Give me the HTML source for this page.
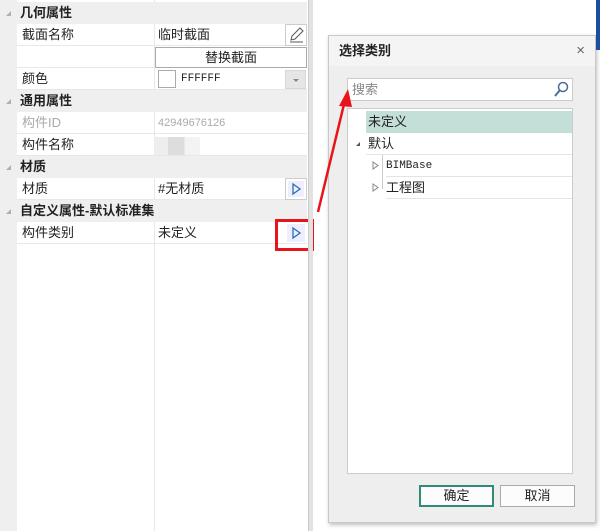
<!DOCTYPE html>
<html><head><meta charset="utf-8"><style>
*{margin:0;padding:0;box-sizing:border-box}
body{width:600px;height:531px;position:relative;overflow:hidden;background:#fff;font-family:"Liberation Sans","Noto Sans CJK SC",sans-serif;font-size:13px;color:#222}
.abs{position:absolute}
.lp{left:0;top:0;width:308px;height:531px;background:#fff}
.gut{left:0;top:0;width:17px;height:531px;background:#efefef}
.row{position:absolute;left:17px;width:290px;height:22px;border-bottom:1px solid #e8e8e8}
.hdr{position:absolute;left:0;width:307px;height:22px;background:#efefef;font-weight:bold;padding-left:20px;line-height:22px}
.hdr:before{content:"";position:absolute;left:6px;top:9px;border-left:5px solid transparent;border-bottom:5px solid #b0b0b0}
.lab{position:absolute;left:5px;top:0;line-height:22px}
.val{position:absolute;left:141px;top:0;line-height:22px}
.vline{left:154px;top:0;width:1px;height:531px;background:#e8e8e8}
.btn{position:absolute;width:22px;height:20px;border:1px solid #ccc;background:#f5f5f5}
</style></head><body>
<div class="abs lp"></div>
<div class="abs gut"></div>
<div class="abs vline"></div>
<div class="hdr" style="top:2px">几何属性</div>
<div class="row" style="top:24px"><span class="lab">截面名称</span><span class="val">临时截面</span>
<div class="btn" style="left:268px;top:0;height:22px;background:#fff"><svg width="20" height="20" viewBox="0 0 20 20"><path d="M5 15 L6 11 L14 3 L17 6 L9 14 Z M4 17 H17" fill="none" stroke="#555" stroke-width="1"/></svg></div></div>
<div class="row" style="top:46px"><div style="position:absolute;left:138px;top:1px;width:152px;height:21px;border:1px solid #aaa;text-align:center;line-height:19px;background:#fff">替换截面</div></div>
<div class="row" style="top:68px"><span class="lab">颜色</span>
<div style="position:absolute;left:141px;top:2px;width:18px;height:18px;border:1px solid #aaa"></div>
<span style="position:absolute;left:164px;line-height:22px;font-family:'Liberation Mono',monospace;font-size:11px">FFFFFF</span>
<div style="position:absolute;left:268px;top:2px;width:21px;height:19px;background:#e6e6e6;border:1px solid #d6d6d6"><div style="position:absolute;left:7px;top:8px;border-left:3px solid transparent;border-right:3px solid transparent;border-top:3px solid #888"></div></div></div>
<div class="hdr" style="top:90px">通用属性</div>
<div class="row" style="top:112px;color:#aaa"><span class="lab">构件ID</span><span class="val" style="font-size:11px">42949676126</span></div>
<div class="row" style="top:134px"><span class="lab">构件名称</span><div style="position:absolute;left:137px;top:3px;width:46px;height:18px;background:linear-gradient(90deg,#eee 0 30%,#ddd 30% 66%,#f3f3f3 66%)"></div></div>
<div class="hdr" style="top:156px">材质</div>
<div class="row" style="top:178px"><span class="lab">材质</span><span class="val">#无材质</span>
<div class="btn" style="left:268px;top:0;height:22px;background:#fff"><svg width="20" height="20"><rect x="2" y="2" width="16" height="16" fill="#eef"/><path d="M7 5 L14 10 L7 15 Z" fill="none" stroke="#2a6fb0" stroke-width="1.3"/></svg></div></div>
<div class="hdr" style="top:200px">自定义属性-默认标准集</div>
<div class="row" style="top:222px"><span class="lab">构件类别</span><span class="val">未定义</span>
<div style="position:absolute;left:270px;top:2px;width:18px;height:18px;background:#eef"><svg width="18" height="18"><path d="M6 4 L13 9 L6 14 Z" fill="none" stroke="#2a6fb0" stroke-width="1.3"/></svg></div></div>
<div class="abs" style="left:275px;top:219px;width:39px;height:32px;border:3px solid #e8141c"></div>
<div class="abs" style="left:308px;top:0;width:5px;height:531px;background:#e2e2e2;border-left:1px solid #ccc"></div>
<div class="abs" style="left:328px;top:35px;width:268px;height:488px;background:#eeeeee;border:1px solid #c8c8c8;box-shadow:1px 2px 4px rgba(0,0,0,.25)">
<div style="height:30px;background:#f4f4f4;font-weight:bold;line-height:30px;padding-left:10px;font-size:13px">选择类别<span style="position:absolute;right:10px;top:0;font-weight:normal;color:#666;font-size:15px">×</span></div>
<div class="abs" style="left:18px;top:42px;width:226px;height:23px;background:#fff;border:1px solid #ccc;color:#888;line-height:21px;padding-left:4px">搜索
<svg style="position:absolute;right:3px;top:2px" width="16" height="17"><circle cx="10" cy="6" r="4.5" fill="none" stroke="#4a6c9a" stroke-width="1.5"/><path d="M7 9 L2 15" stroke="#4a6c9a" stroke-width="2"/></svg></div>
<div class="abs" style="left:18px;top:72px;width:226px;height:366px;background:#fff;border:1px solid #ccc">
<div class="abs" style="left:18px;top:2px;width:206px;height:22px;background:#c4ded8;line-height:22px;padding-left:2px">未定义</div>
<div class="abs" style="left:18px;top:24px;width:206px;height:22px;line-height:22px;padding-left:2px;border-bottom:1px solid #e4e4e4">默认</div>
<div class="abs" style="left:8px;top:33px;border-left:4px solid transparent;border-bottom:4px solid #555"></div>
<div class="abs" style="left:34px;top:46px;width:1px;height:34px;background:#ccc"></div>
<div class="abs" style="left:38px;top:46px;width:186px;height:22px;line-height:22px;padding-left:0;border-bottom:1px solid #e4e4e4;font-family:'Liberation Mono',monospace;font-size:11px">BIMBase</div>
<div class="abs" style="left:38px;top:68px;width:186px;height:22px;line-height:22px;border-bottom:1px solid #e4e4e4">工程图</div>
<svg class="abs" style="left:24px;top:52px" width="12" height="34"><path d="M1 1 L6 4.5 L1 8 Z M1 23 L6 26.5 L1 30 Z" fill="#fff" stroke="#888"/></svg>
</div>
<div class="abs" style="left:90px;top:449px;width:75px;height:22px;border:2px solid #2f8b7a;background:#fcfcfc;text-align:center;line-height:18px">确定</div>
<div class="abs" style="left:171px;top:449px;width:75px;height:22px;border:1px solid #aaa;background:#fcfcfc;text-align:center;line-height:20px">取消</div>
</div>
<svg class="abs" style="left:310px;top:80px;z-index:5" width="50" height="140"><path d="M8 132 L35 20" stroke="#e8141c" stroke-width="2.5"/><path d="M38 9 L29 26 L42 27 Z" fill="#e8141c"/></svg>
<div class="abs" style="left:596px;top:0;width:4px;height:50px;background:#1a4fa0"></div>
</body></html>
